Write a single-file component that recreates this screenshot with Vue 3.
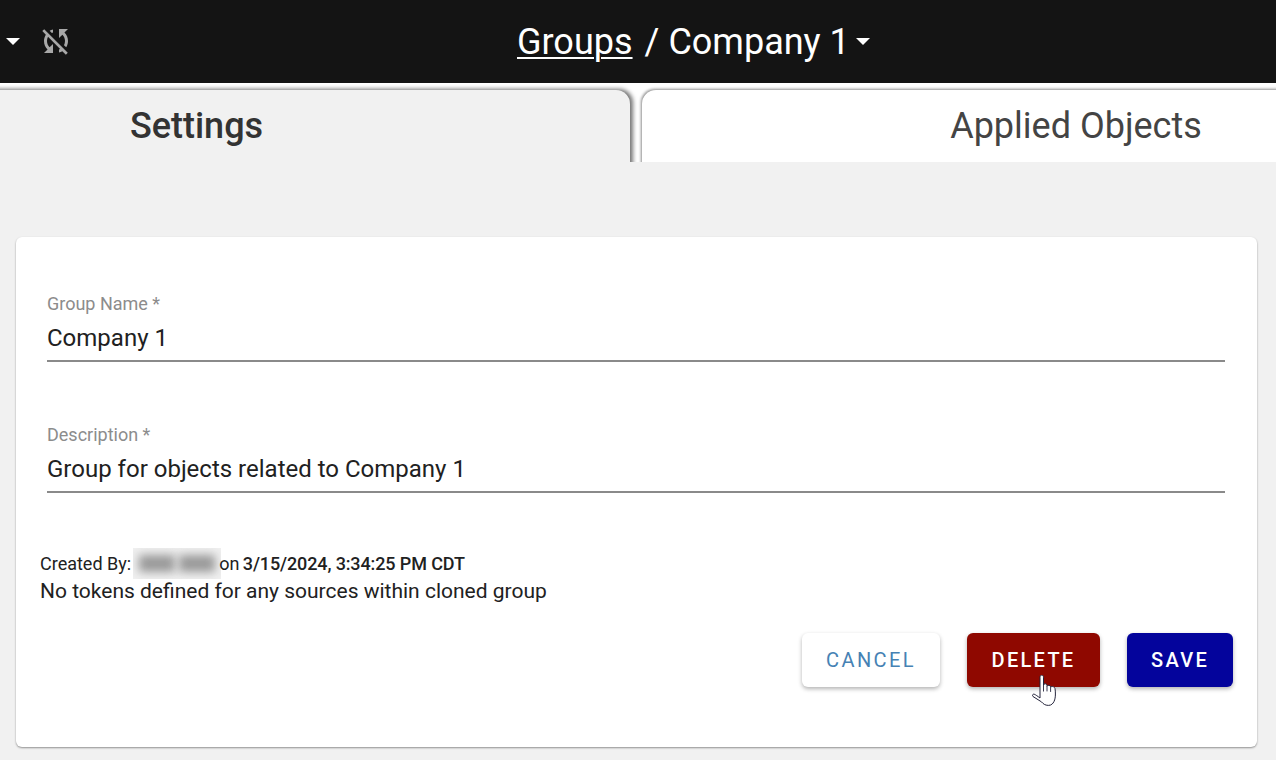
<template>
  <div class="page">
    <header class="topbar">
      <div class="left">
        <span class="caret small"></span>
        <svg class="sync" width="36" height="36" viewBox="0 0 24 24"><path fill="#a8a8a8" d="M10 6.35V4.26c-.8.21-1.55.54-2.23.96l1.46 1.46c.25-.12.5-.24.77-.33zm-7.14-.94l2.36 2.36C4.45 8.99 4 10.44 4 12c0 2.21.91 4.2 2.36 5.64L4 20h6v-6l-2.24 2.24C6.68 15.15 6 13.66 6 12c0-1 .25-1.94.68-2.77l8.08 8.08c-.25.13-.5.25-.77.34v2.09c.8-.21 1.55-.54 2.23-.96l2.36 2.36 1.27-1.27L4.14 4.14 2.86 5.41zM20 4h-6v6l2.24-2.24C17.32 8.85 18 10.34 18 12c0 1-.25 1.94-.68 2.77l1.46 1.46C19.55 15.01 20 13.56 20 12c0-2.21-.91-4.2-2.36-5.64L20 4z"/></svg>
      </div>
      <div class="crumbs">
        <a class="link">Groups</a>
        <span class="slash">/</span>
        <span>Company 1</span>
        <span class="caret"></span>
      </div>
    </header>

    <nav class="tabs">
      <div class="tab active">Settings</div>
      <div class="tab">Applied Objects</div>
    </nav>

    <main class="content">
      <section class="card">
        <div class="field">
          <label>Group Name *</label>
          <div class="value">Company 1</div>
        </div>
        <div class="field second">
          <label>Description *</label>
          <div class="value">Group for objects related to Company 1</div>
        </div>
        <div class="meta">
          <div class="created">Created By:<span class="blur"><i></i><i></i></span><span class="on">on </span><b>3/15/2024, 3:34:25 PM CDT</b></div>
          <div class="tokens">No tokens defined for any sources within cloned group</div>
        </div>
        <div class="actions">
          <button class="btn cancel">CANCEL</button>
          <button class="btn delete">DELETE</button>
          <button class="btn save">SAVE</button>
          <svg class="hand" width="25" height="32" viewBox="0 0 25 32"><path fill="#fff" stroke="#23233a" stroke-width="1" stroke-linejoin="round" d="M8 2.200c0-2.800 3.500-2.800 3.500 0V10c.4-1.800 3.400-1.600 3.500.4v1c.4-1.600 3.500-1.400 3.600.4v.6c.5-1.400 3.900-1.200 4.400 1.200.3 1.500.4 3.400.4 5.400 0 3-.4 5.500-1.400 7.500-1 2-2.600 3.900-5.500 3.900-3.500 0-5.200-1.500-7-3.500L1 21.500c-1-1.200-.3-2.700 1.200-2.300 1.500.5 3.300 2 5.800 3.800z"/><path fill="none" stroke="#23233a" stroke-width=".9" d="M11.500 10v6.500M15 11.400v5M18.600 12.400v4.500"/></svg>
        </div>
      </section>
    </main>
  </div>
</template>

<script setup>
</script>

<style>
html, body { margin: 0; background: #f1f1f1; overflow: hidden; }
</style>

<style scoped>
.page {
  width: 1276px;
  height: 760px;
  overflow: hidden;
  background: #f1f1f1;
  font-family: Roboto, "Liberation Sans", sans-serif;
  color: #212121;
}
.topbar {
  height: 83px;
  background: #141414;
  color: #fff;
  display: flex;
  align-items: center;
  position: relative;
}
.left {
  display: flex;
  align-items: center;
  padding-left: 6px;
  gap: 18px;
  width: 517px;
  box-sizing: border-box;
}
.sync { flex: none; margin-bottom: 2px; }
.caret {
  display: inline-block;
  width: 0;
  height: 0;
  border-left: 7px solid transparent;
  border-right: 7px solid transparent;
  border-top: 7px solid #fff;
}
.crumbs {
  display: flex;
  align-items: center;
  font-size: 36px;
  line-height: 42px;
}
.link { text-decoration: underline; text-underline-offset: 3px; text-decoration-thickness: 2px; }
.slash { margin: 0 9px 0 12px; }
.crumbs .caret { margin-left: 6px; }
.tabs {
  height: 79px;
  background: #fff;
  display: flex;
  gap: 12px;
  margin-left: -240px;
  padding-top: 7px;
  box-sizing: border-box;
  overflow: hidden;
}
.tab {
  flex: none;
  width: 868px;
  height: 90px;
  text-align: center;
  font-size: 36px;
  line-height: 72px;
  font-weight: 400;
  color: #444;
  background: #fff;
  border-radius: 14px 14px 0 0;
  box-shadow: -1px -1px 3px rgba(0,0,0,.45);
  box-sizing: border-box;
}
.tab.active {
  width: 870px;
  padding-left: 3px;
  background: #f1f1f1;
  font-weight: 500;
  color: #333;
  box-shadow: 3px -1px 4px rgba(0,0,0,.55);
}
.content { padding: 75px 19px 0 16px; }
.card {
  height: 510px;
  background: #fff;
  border-radius: 6px;
  box-shadow: 0 1px 2px rgba(0,0,0,.4);
  padding: 57px 32px 0 31px;
  box-sizing: border-box;
  position: relative;
}
.field {
  border-bottom: 2px solid #8a8a8a;
  height: 68px;
  box-sizing: border-box;
}
.field.second { margin-top: 63px; }
.field label {
  display: block;
  font-size: 18px;
  line-height: 20px;
  color: #8c8c8c;
}
.value {
  font-size: 24px;
  line-height: 28px;
  margin-top: 10px;
  color: #212121;
}
.meta { margin-top: 55px; margin-left: -7px; }
.created { font-size: 18px; line-height: 24px; display: flex; align-items: center; white-space: pre; }
.created b { font-weight: 500; letter-spacing: -.12px; margin-left: -1px; }
.on { position: relative; }
.blur {
  width: 88px;
  height: 31px;
  margin: 0 -2px 0 2px;
  background: #f0f0f0;
  display: flex;
  align-items: center;
  justify-content: center;
  gap: 4px;
  overflow: hidden;
}
.blur i {
  display: block;
  flex: none;
  width: 36px;
  height: 17px;
  background: #999;
  filter: blur(5px);
}
.tokens { font-size: 21px; line-height: 24px; }
.actions {
  display: flex;
  justify-content: flex-end;
  gap: 27px;
  margin-top: 30px;
  margin-right: -8px;
  position: relative;
}
.btn {
  height: 54px;
  border: 0;
  border-radius: 6px;
  font-family: inherit;
  font-size: 20px;
  font-weight: 500;
  letter-spacing: 2.3px;
  color: #fff;
  box-shadow: 0 2px 4px rgba(0,0,0,.3);
  padding: 0;
}
.cancel { width: 138px; background: #fff; color: #4682b4; font-weight: 400; letter-spacing: 2.4px; }
.delete { width: 133px; background: #8f0800; }
.save { width: 106px; background: #04049c; }
.hand { position: absolute; left: 985px; top: 42px; }
</style>
